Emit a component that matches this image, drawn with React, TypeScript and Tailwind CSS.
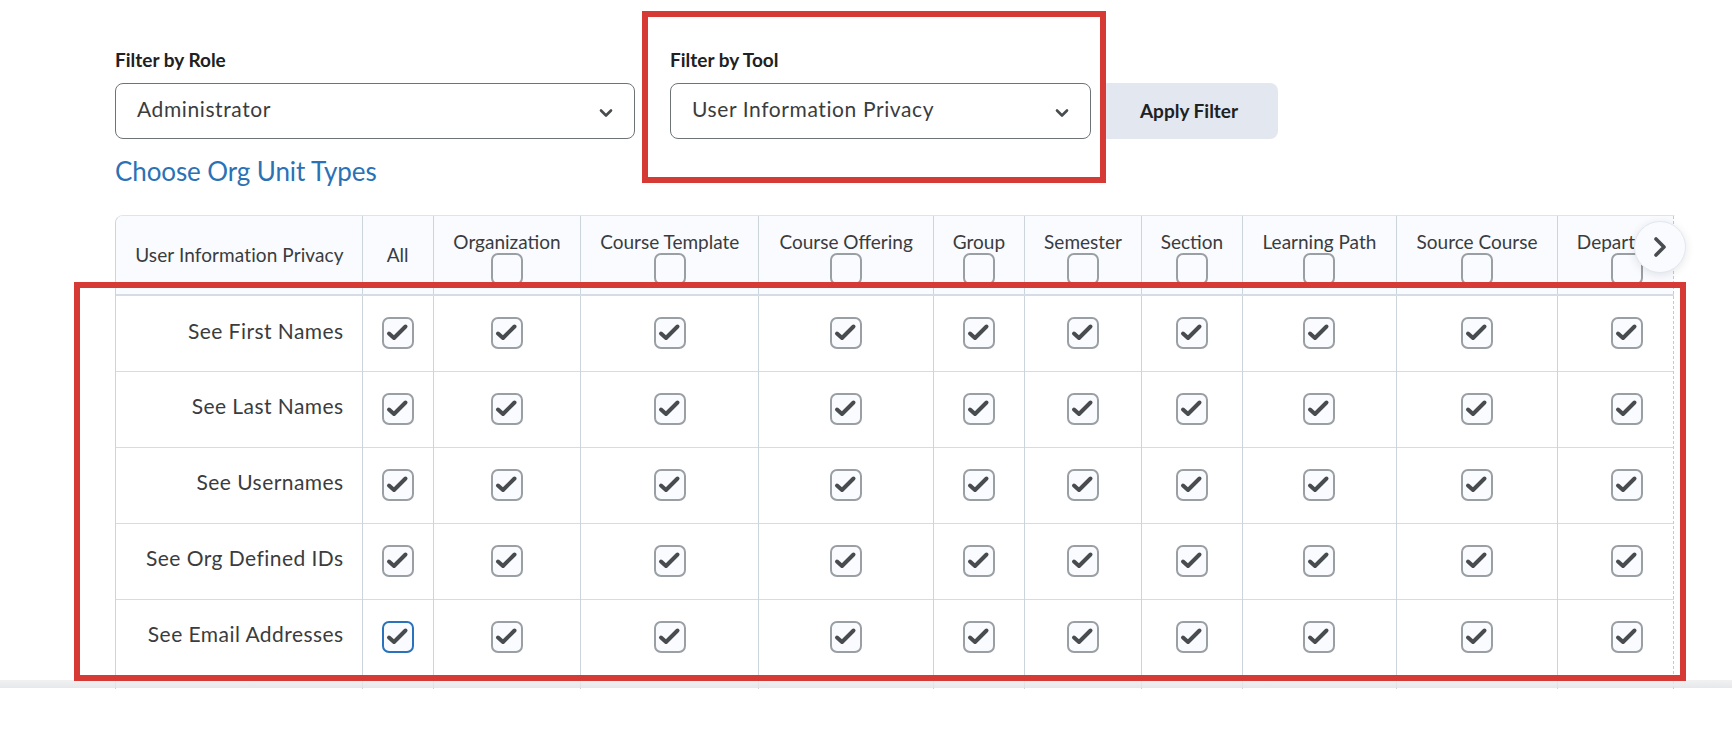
const cols = [
  { name: "Organization", w: 147.5 },
  { name: "Course Template", w: 178 },
  { name: "Course Offering", w: 174.5 },
  { name: "Group", w: 91 },
  { name: "Semester", w: 117 },
  { name: "Section", w: 100.5 },
  { name: "Learning Path", w: 154.5 },
  { name: "Source Course", w: 160.5 },
  { name: "Department", w: 140 },
];
const rows = ["See First Names", "See Last Names", "See Usernames", "See Org Defined IDs", "See Email Addresses"];

function Box({ checked, focus }: { checked?: boolean; focus?: boolean }) {
  return (
    <span
      className={
        "inline-flex h-[32px] w-[32px] items-center justify-center rounded-[7px] border-2 bg-[#f9fbff] align-top " +
        (focus ? "border-[#2a72bb]" : "border-[#9a9fa3]")
      }
    >
      {checked && (
        <svg width="32" height="32" viewBox="0 0 32 32" className="shrink-0">
          <path d="M7 16.5l5 4.5L23.5 9.5" fill="none" stroke="#494c4e" strokeWidth="4" strokeLinecap="round" strokeLinejoin="round" />
        </svg>
      )}
    </span>
  );
}

function Chevron() {
  return (
    <svg width="16" height="12" viewBox="0 0 16 12" className="mt-[4px]">
      <path d="M3 3.5l5 5 5-5" fill="none" stroke="#494c4e" strokeWidth="2.6" strokeLinecap="round" strokeLinejoin="round" />
    </svg>
  );
}

function Select({ label, value, className }: { label: string; value: string; className: string }) {
  return (
    <div className="flex flex-col">
      <label className="h-[22px] text-[19px] font-bold leading-[22px] text-[#202122]">{label}</label>
      <div className={"mt-[12px] flex h-[56px] items-center justify-between rounded-[8px] border border-[#6e7376] bg-white pl-[21px] pr-[20px] " + className}>
        <span className="-mt-[5px] text-[21px] tracking-[0.6px] text-[#3a3c3e]">{value}</span>
        <Chevron />
      </div>
    </div>
  );
}

export default function App() {
  return (
    <div className="relative h-[744px] w-[1732px] overflow-hidden bg-white font-['Lato','Liberation_Sans',sans-serif]">
      <div className="pl-[115px] pt-[49px]">
        <div className="flex items-end">
          <Select label="Filter by Role" value="Administrator" className="w-[520px]" />
          <div className="ml-[35px]">
            <Select label="Filter by Tool" value="User Information Privacy" className="w-[421px]" />
          </div>
          <button className="ml-[9px] h-[56px] w-[178px] rounded-[8px] bg-[#e3e7ef] text-[19px] font-bold text-[#202122]">Apply Filter</button>
        </div>
        <a className="mt-[16px] block h-[32px] text-[26px] leading-[32px] tracking-[-0.1px] text-[#2a72b5]">Choose Org Unit Types</a>

        <div className="relative mt-[28px] h-[474px] w-[1560px] overflow-hidden rounded-tl-[8px] border-l border-r border-t border-r-transparent border-l-[#cdd5dc] border-t-[#dfe4ec]">
          <table className="w-[1582px] table-fixed border-collapse">
            <colgroup>
              <col className="w-[246px]" />
              <col className="w-[71px]" />
              {cols.map((c) => (
                <col key={c.name} style={{ width: c.w }} />
              ))}
            </colgroup>
            <thead>
              <tr className="h-[79px] border-b-2 border-[#d6dce5] bg-[#f9fbff]">
                <th className="whitespace-nowrap border-r border-[#cdd5dc] pr-[18px] pt-[1px] text-right text-[19px] font-normal tracking-[0.1px] text-[#3a3c3e]">User Information Privacy</th>
                <th className="border-r border-[#cdd5dc] pt-[1px] text-center text-[19px] font-normal text-[#3a3c3e]">All</th>
                {cols.map((c) => (
                  <th key={c.name} className="overflow-hidden border-r border-[#cdd5dc] pt-[15px] text-center align-top text-[19px] font-normal text-[#3a3c3e]">
                    <span className="block whitespace-nowrap leading-[22px]">{c.name}</span>
                    <span className="block h-[41px]">
                      <Box />
                    </span>
                  </th>
                ))}
              </tr>
            </thead>
            <tbody>
              {rows.map((r, i) => (
                <tr key={r} className="h-[76px] border-b border-[#d6dce5]">
                  <td className="border-r border-[#cdd5dc] pb-[6px] pr-[18px] text-right text-[21px] tracking-[0.45px] text-[#3a3c3e]">{r}</td>
                  <td className="border-r border-[#cdd5dc] text-center">
                    <Box checked focus={i === 4} />
                  </td>
                  {cols.map((c) => (
                    <td key={c.name} className="border-r border-[#cdd5dc] text-center">
                      <Box checked />
                    </td>
                  ))}
                </tr>
              ))}
              <tr className="h-[20px]">
                <td className="border-r border-[#cdd5dc]" />
                <td className="border-r border-[#cdd5dc]" />
                {cols.map((c) => (
                  <td key={c.name} className="border-r border-[#cdd5dc]" />
                ))}
              </tr>
            </tbody>
          </table>
          <div className="absolute bottom-0 right-0 top-0 w-0 border-r border-dashed border-[#c4cad1]" />
        </div>
      </div>

      {/* floating footer shadow */}
      <div className="absolute left-0 right-0 top-[680px] h-[8px] bg-gradient-to-b from-[#eeeeee]/80 to-[#dfe2e5]/80" />

      {/* scroll button */}
      <button className="absolute left-[1634px] top-[221px] flex h-[52px] w-[52px] items-center justify-center rounded-full border border-[#e3e7ef] bg-[#f9fbff] shadow-[0_2px_10px_rgba(0,0,0,0.10)]">
        <svg width="20" height="24" viewBox="0 0 20 24">
          <path d="M6 4l8 8-8 8" fill="none" stroke="#494c4e" strokeWidth="3.6" strokeLinecap="round" strokeLinejoin="round" />
        </svg>
      </button>

      {/* annotation rectangles */}
      <div className="absolute left-[642px] top-[11px] h-[172px] w-[464px] border-[6px] border-[#d63a34]" />
      <div className="absolute left-[74px] top-[282px] h-[398.5px] w-[1612px] border-[6px] border-[#d63a34]" />
    </div>
  );
}
